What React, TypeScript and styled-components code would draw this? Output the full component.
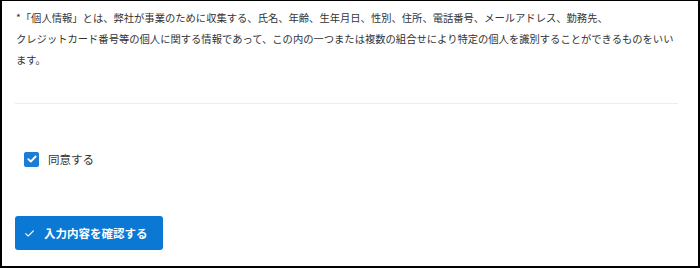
import React from "react";
import styled, { createGlobalStyle } from "styled-components";

const Global = createGlobalStyle`
  html, body { margin: 0; padding: 0; background: #fff; }
  body { font-family: "Noto Sans CJK JP", "Noto Sans", sans-serif; }
  * { box-sizing: border-box; }
`;

const Frame = styled.div`
  width: 700px;
  height: 268px;
  border-style: solid;
  border-color: #000;
  border-width: 1px 2px 2px 2px;
  padding: 6px 20px 0 13px;
  display: flex;
  flex-direction: column;
  overflow: hidden;
`;

const Note = styled.p`
  margin: 0;
  padding-left: 1px;
  font-size: 10.3px;
  line-height: 21px;
  color: #333;
`;

const Divider = styled.hr`
  margin: 33px 0 0 0;
  border: none;
  height: 1px;
  background: #ececec;
`;

const CheckRow = styled.label`
  margin-top: 45px;
  height: 20px;
  display: flex;
  align-items: center;
  gap: 9px;
  padding-left: 9px;
  font-size: 11.5px;
  color: #333;
`;

const Box = styled.span`
  width: 15px;
  height: 15px;
  border-radius: 2px;
  background: #1a7ed6;
  display: inline-flex;
  align-items: center;
  justify-content: center;
`;

const Button = styled.button`
  margin-top: 47px;
  align-self: flex-start;
  width: 148px;
  height: 34px;
  border: none;
  border-radius: 3px;
  background: #0b79d3;
  color: #fff;
  font-family: inherit;
  font-size: 11.5px;
  font-weight: 700;
  display: flex;
  align-items: center;
  padding: 0 0 0 10px;
  gap: 10px;
  cursor: pointer;
`;

export default function App() {
  return (
    <>
      <Global />
      <Frame>
        <Note>
          *「個人情報」とは、弊社が事業のために収集する、氏名、年齢、生年月日、性別、住所、電話番号、メールアドレス、勤務先、
          <br />
          クレジットカード番号等の個人に関する情報であって、この内の一つまたは複数の組合せにより特定の個人を識別することができるものをいい
          <br />
          ます。
        </Note>
        <Divider />
        <CheckRow>
          <Box>
            <svg width="10" height="8" viewBox="0 0 10 8">
              <path d="M1.3 4.2 L3.8 6.5 L8.7 1.5" fill="none" stroke="#fff" strokeWidth="1.8" strokeLinecap="round" strokeLinejoin="round" />
            </svg>
          </Box>
          同意する
        </CheckRow>
        <Button type="button">
          <svg width="9" height="7" viewBox="0 0 9 7">
            <path d="M0.6 3.6 L3.2 6 L8.4 0.8" fill="none" stroke="#fff" strokeWidth="1.1" strokeLinecap="round" strokeLinejoin="round" />
          </svg>
          入力内容を確認する
        </Button>
      </Frame>
    </>
  );
}
